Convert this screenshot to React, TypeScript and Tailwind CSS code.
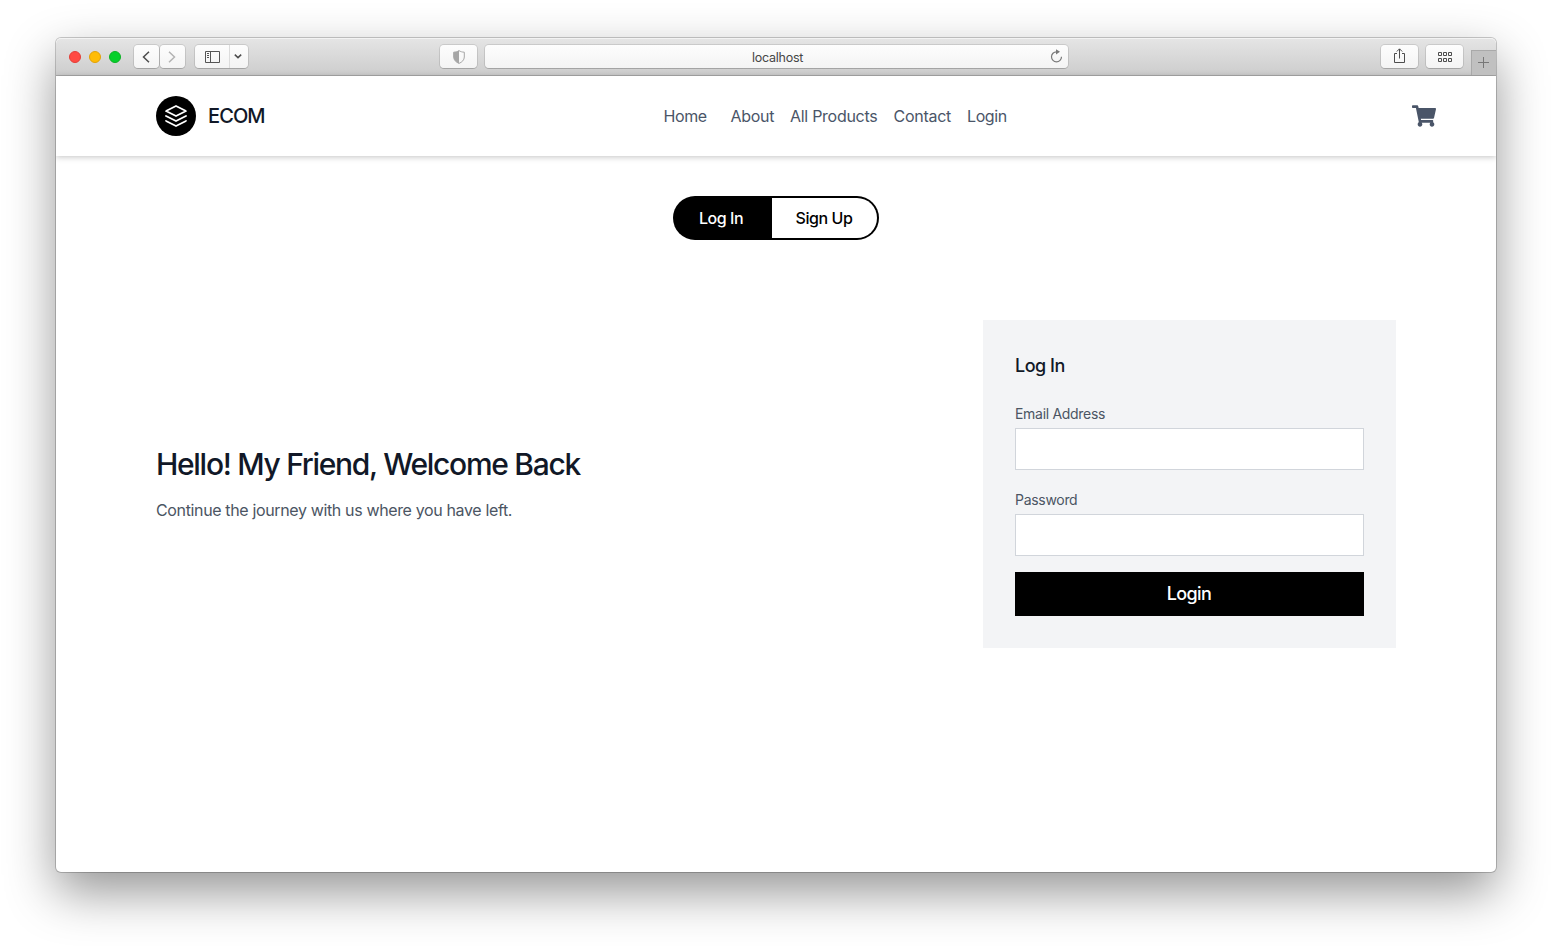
import React from "react";
import { FaShoppingCart } from "react-icons/fa";

const toolButton =
  "flex h-[23px] items-center justify-center rounded-[4px] bg-linear-to-b from-[#fdfdfd] to-[#f4f4f4] shadow-[0_0_0_1px_rgba(0,0,0,0.1),0_1px_0_rgba(0,0,0,0.12)]";

function Toolbar() {
  return (
    <div className="flex h-[38px] items-center rounded-t-[5px] border-b border-[#a9a9a9] bg-linear-to-b from-[#e5e5e5] to-[#cdcdcd] shadow-[inset_0_1px_0_#f3f3f3]">
      <div className="ml-[13px] flex gap-2">
        <span className="size-3 rounded-full border border-[#e33e38] bg-[#ff4a43]" />
        <span className="size-3 rounded-full border border-[#e2a208] bg-[#ffbc05]" />
        <span className="size-3 rounded-full border border-[#0cb124] bg-[#05d02b]" />
      </div>
      <div className="ml-[13px] flex gap-px">
        <div className={`w-[25px] pr-px ${toolButton}`}>
          <svg width="8" height="12" viewBox="0 0 8 12" fill="none" stroke="#4d4d4d" strokeWidth="1.5">
            <path d="M7 .7 1.5 6 7 11.3" />
          </svg>
        </div>
        <div className={`w-[25px] pr-px ${toolButton}`}>
          <svg width="8" height="12" viewBox="0 0 8 12" fill="none" stroke="#b3b3b3" strokeWidth="1.5">
            <path d="m1 .7 5.5 5.3L1 11.3" />
          </svg>
        </div>
      </div>
      <div className={`ml-[10px] w-[53px] ${toolButton}`}>
        <div className="flex h-full w-[35px] items-center justify-center border-r border-[#dcdcdc]">
          <svg width="15" height="12" viewBox="0 0 15 12" fill="none" stroke="#555" className="ml-px">
            <path d="M.5.5h14v11H.5zM5.5.5v11M2 2.500h2M2 4.500h2M2 6.500h2" />
          </svg>
        </div>
        <div className="flex flex-1 items-center justify-center pr-[3px]">
          <svg width="8" height="5" viewBox="0 0 8 5" fill="none" stroke="#4d4d4d" strokeWidth="1.5">
            <path d="m.8.6 3.2 3 3.2-3" />
          </svg>
        </div>
      </div>
      <div className={`ml-[192px] w-[37px] ${toolButton}`}>
        <svg width="12" height="14" viewBox="0 0 12 14">
          <path d="M6 .6C4.500 1.700 2.700 2.100.7 2.200V7c0 3 2.300 5.200 5.300 6.400C9 12.200 11.300 10 11.300 7V2.200C9.300 2.100 7.500 1.700 6 .6z" fill="none" stroke="#a6a6a6" />
          <path d="M6 .6C4.500 1.700 2.700 2.100.7 2.200V7c0 3 2.300 5.200 5.300 6.400z" fill="#a6a6a6" />
        </svg>
      </div>
      <div className={`ml-2 w-[583px] pr-[5px] pl-[6px] ${toolButton}`}>
        <span className="flex-1 pt-[3px] pl-[14px] text-center text-[12.5px] leading-[18px] tracking-[-0.25px] text-[#464646]">localhost</span>
        <svg width="13" height="14" viewBox="0 0 13 14" fill="none" className="-mt-px">
          <path d="M7.500 2.800H6.500a5 5 0 1 0 5 5" stroke="#7a7a7a" strokeWidth="1.200" />
          <path d="M6 .2 10 2.800 6 5.400z" fill="#7a7a7a" />
        </svg>
      </div>
      <div className={`ml-[313px] w-[37px] pb-px ${toolButton}`}>
        <svg width="13" height="16" viewBox="0 0 13 16" fill="none" stroke="#4d4d4d">
          <path d="M4 5.500H1.500v9h10v-9H9M6.500 10.500V1M3.800 3.500 6.500.8l2.700 2.700" />
        </svg>
      </div>
      <div className={`ml-2 w-[37px] ${toolButton}`}>
        <svg width="14" height="10" viewBox="0 0 14 10" fill="none" stroke="#4d4d4d">
          <path d="M.5.5h3v3h-3zM5.500.5h3v3h-3zM10.500.5h3v3h-3zM.5 6.500h3v3h-3zM5.500 6.500h3v3h-3zM10.500 6.500h3v3h-3z" />
        </svg>
      </div>
      <div className="ml-auto flex h-[25px] w-[25px] items-center justify-center self-end border-t border-l border-[#a9a9a9] bg-[#c0c0c0] pr-px pb-px">
        <svg width="11" height="11" viewBox="0 0 11 11" stroke="#777">
          <path d="M5.500 0v11M0 5.500h11" />
        </svg>
      </div>
    </div>
  );
}

function Header() {
  return (
    <header className="flex h-20 items-center pr-[60px] pl-[100px] text-[#4a5568] shadow-[0_1px_6px_rgba(0,0,0,0.24)]">
      <a className="flex w-[507.500px] items-center text-[#111827]">
        <svg className="size-10 rounded-full bg-black p-2 text-white" viewBox="0 0 24 24" fill="none" stroke="currentColor" strokeWidth="1.9" strokeLinecap="round" strokeLinejoin="round">
          <path d="M12 2L2 7l10 5 10-5-10-5zM2 17l10 5 10-5M2 12l10 5 10-5" />
        </svg>
        <span className="ml-3 text-xl font-medium tracking-[-0.9px]">ECOM</span>
      </a>
      <nav className="flex tracking-[-0.4px] whitespace-nowrap">
        <a className="w-[67px]">Home</a>
        <a className="w-[59.500px] tracking-[-0.3px]">About</a>
        <a className="w-[103.500px] tracking-[-0.28px]">All Products</a>
        <a className="w-[73.500px] tracking-[-0.28px]">Contact</a>
        <a>Login</a>
      </nav>
      <FaShoppingCart className="ml-auto size-6" />
    </header>
  );
}

function Field({ label, type }: { label: string; type: string }) {
  return (
    <div className="mb-4">
      <label className="block text-sm leading-7 tracking-[-0.3px] text-[#4b5563]">{label}</label>
      <input type={type} aria-label={label} className="block h-[42px] w-full border border-[#d1d5db] bg-white px-3 outline-none" />
    </div>
  );
}

export default function App() {
  return (
    <div className="h-[946px] overflow-hidden bg-white px-14 pt-[38px] font-['Inter','Liberation_Sans',sans-serif]">
      <div className="h-[834px] rounded-[5px] bg-white shadow-[0_0_0_1px_rgba(0,0,0,0.2),0_20px_50px_rgba(0,0,0,0.42)]">
        <div className="h-full overflow-hidden rounded-[5px]">
          <Toolbar />
          <Header />
          <main>
            <div className="mx-auto mt-10 flex h-11 w-[206px] text-base font-medium tracking-[-0.45px]">
              <button className="w-[99px] rounded-l-full bg-black pr-[3px] text-white">Log In</button>
              <button className="flex-1 rounded-r-full border-2 border-l-0 border-black pr-px text-black">Sign Up</button>
            </div>
            <section className="mt-20 flex items-center justify-between px-[100px]">
              <div>
                <h1 className="pt-px text-3xl leading-9 font-medium tracking-[-1.3px] text-[#111827]">Hello! My Friend, Welcome Back</h1>
                <p className="mt-[15px] leading-[26px] tracking-[-0.36px] text-[#4b5563]">Continue the journey with us where you have left.</p>
              </div>
              <form className="h-[328px] w-[413px] bg-[#f3f4f6] p-8" onSubmit={(e) => e.preventDefault()}>
                <h2 className="mb-5 text-lg leading-7 font-medium tracking-[-0.5px] text-[#111827]">Log In</h2>
                <Field label="Email Address" type="email" />
                <Field label="Password" type="password" />
                <button className="h-11 w-full bg-black pr-px text-lg font-medium tracking-[-0.6px] text-white">Login</button>
              </form>
            </section>
          </main>
        </div>
      </div>
    </div>
  );
}
